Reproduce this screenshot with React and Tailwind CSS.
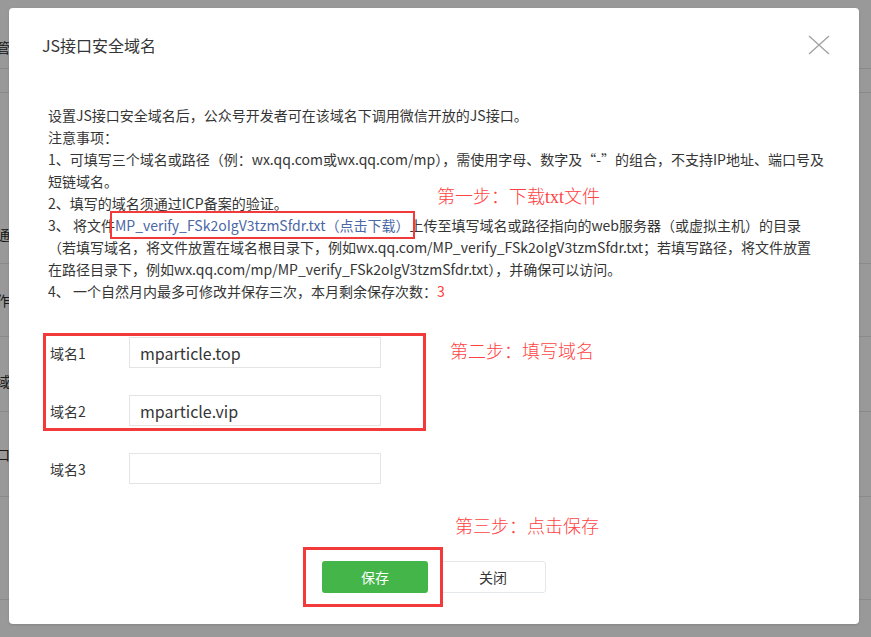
import React from 'react';

const bgRows = [
  { h: 'h-[69px]', text: '管', align: 'items-end pb-[10px]' },
  { h: 'h-[24px]', text: '', align: '' },
  { h: 'h-[171px]', text: '通', align: 'items-end pb-[18px]' },
  { h: 'h-[73px]', text: '作', align: 'items-center' },
  { h: 'h-[75px]', text: '域', align: 'items-center pt-[14px]' },
  { h: 'h-[85px]', text: '口', align: 'items-center' },
  { h: 'h-[103px]', text: '', align: '' },
];

const Annotation = ({ className, children }) => (
  <div className={`absolute text-[18px] leading-[24px] font-light text-[#ff4343] whitespace-nowrap font-['Liberation_Serif','Noto_Sans_CJK_SC',serif] ${className}`}>
    {children}
  </div>
);

const DomainRow = ({ label, value }) => (
  <div className="flex items-center">
    <div className="w-[81px] pl-[2px] text-[14px] text-[#353535]">{label}</div>
    <input
      type="text"
      readOnly
      value={value}
      className="w-[252px] h-[31px] border border-[#e4e4e4] px-[10px] text-[16px] text-[#353535] outline-none"
    />
  </div>
);

const App = () => {
  return (
    <div className="relative w-[871px] h-[637px] overflow-hidden bg-white font-['Noto_Sans_CJK_SC',sans-serif]">
      {/* page underneath the dialog */}
      <div className="flex flex-col">
        {bgRows.map((row, i) => (
          <div key={i} className={`${row.h} flex ${row.align} border-b border-[#e6e6e6] text-[14px] text-[#2a2a2a]`}>
            <span className="-ml-[4px]">{row.text}</span>
          </div>
        ))}
      </div>

      <div className="absolute inset-0 bg-black/40" />

      <div className="absolute left-[9px] top-[8px] w-[850px] h-[616px] bg-white rounded-[4px] shadow-sm flex flex-col">
        <div className="flex items-start h-[74px] pl-[33px] pr-[29px] pt-[25px]">
          <h3 className="text-[16px] leading-[24px] text-[#353535]">JS接口安全域名</h3>
          <svg className="ml-auto mt-[2px]" width="22" height="20" viewBox="0 0 22 20">
            <path d="M1 1 L21 19 M21 1 L1 19" stroke="#a3a3a3" strokeWidth="1.4" fill="none" />
          </svg>
        </div>

        <div className="px-[39px] pt-[22px] text-[14px] leading-[22px] text-[#353535]">
          <div className="whitespace-nowrap">
            <div>设置JS接口安全域名后，公众号开发者可在该域名下调用微信开放的JS接口。</div>
            <div>注意事项：</div>
            <div>1、可填写三个域名或路径（例：wx.qq.com或wx.qq.com/mp），需使用字母、数字及“-”的组合，不支持IP地址、端口号及</div>
            <div>短链域名。</div>
            <div>2、填写的域名须通过ICP备案的验证。</div>
            <div>
              3、 将文件<a className="text-[#4a67a6]">MP_verify_FSk2oIgV3tzmSfdr.txt（点击下载）</a>上传至填写域名或路径指向的web服务器（或虚拟主机）的目录
            </div>
            <div>（若填写域名，将文件放置在域名根目录下，例如wx.qq.com/MP_verify_FSk2oIgV3tzmSfdr.txt；若填写路径，将文件放置</div>
            <div>在路径目录下，例如wx.qq.com/mp/MP_verify_FSk2oIgV3tzmSfdr.txt），并确保可以访问。</div>
            <div>
              4、 一个自然月内最多可修改并保存三次，本月剩余保存次数：<span className="text-[#ff3d3d]">3</span>
            </div>
          </div>

          <div className="mt-[35px] flex flex-col gap-[27px]">
            <DomainRow label="域名1" value="mparticle.top" />
            <DomainRow label="域名2" value="mparticle.vip" />
            <DomainRow label="域名3" value="" />
          </div>
        </div>

        <div className="mt-[77px] flex justify-center gap-[12px]">
          <button className="w-[106px] h-[32px] rounded-[3px] bg-[#44b549] text-white text-[14px]">保存</button>
          <button className="w-[106px] h-[32px] rounded-[3px] border border-[#e4e8eb] bg-white text-[#353535] text-[14px]">关闭</button>
        </div>

        {/* annotations drawn over the dialog */}
        <div className="absolute left-[101px] top-[203px] w-[305px] h-[28px] border-2 border-[#f33a3a]" />
        <Annotation className="left-[428px] top-[177px]">第一步：下载txt文件</Annotation>
        <div className="absolute left-[34px] top-[325px] w-[383px] h-[98px] border-[3px] border-[#f33a3a]" />
        <Annotation className="left-[441px] top-[332px]">第二步：填写域名</Annotation>
        <Annotation className="left-[446px] top-[507px]">第三步：点击保存</Annotation>
        <div className="absolute left-[294px] top-[539px] w-[140px] h-[60px] border-[3px] border-[#f33a3a]" />
      </div>
    </div>
  );
};

export default App;
